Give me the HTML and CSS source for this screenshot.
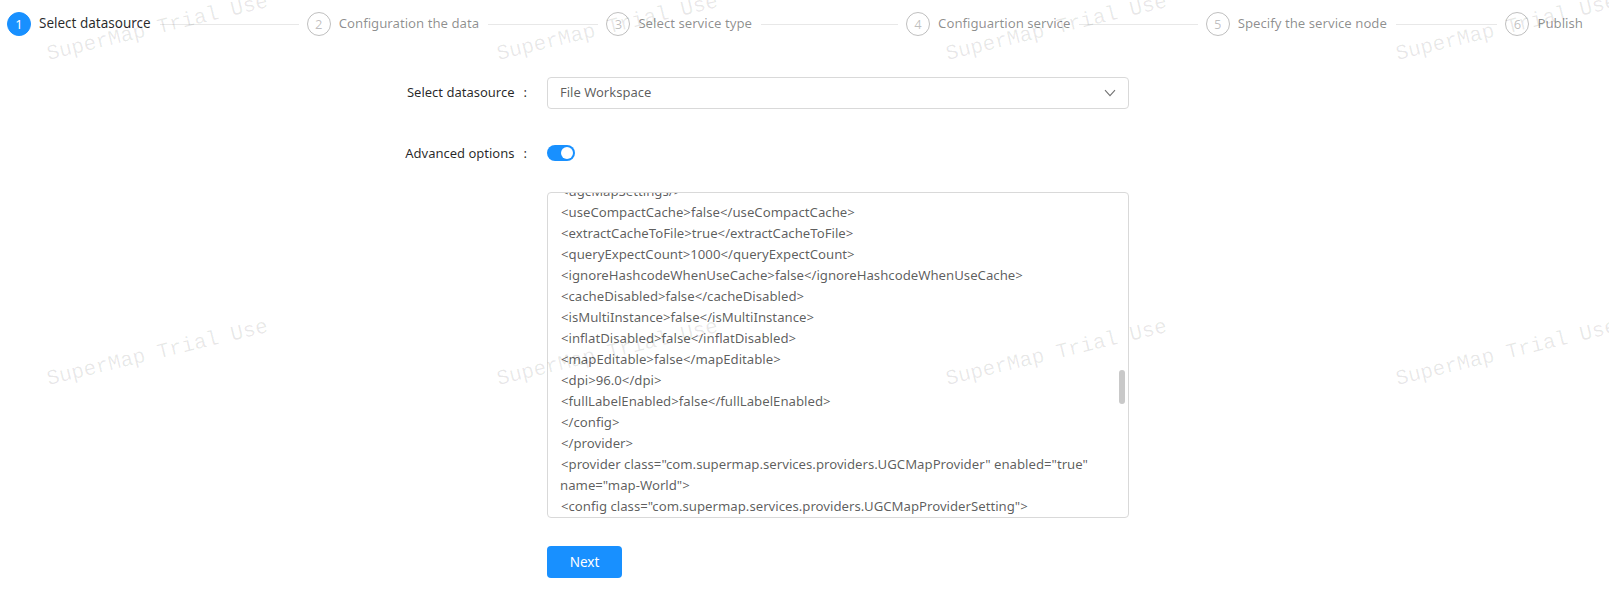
FILE: index.html
```html
<!DOCTYPE html>
<html lang="en">
<head>
<meta charset="utf-8">
<title>Publish service</title>
<link rel="stylesheet" href="styles.css">
</head>
<body>
<div class="page">
  <div class="steps">
    <div class="step active"><span class="num">1</span><span class="title">Select datasource</span><span class="tail"></span></div>
    <div class="step"><span class="num">2</span><span class="title">Configuration the data</span><span class="tail"></span></div>
    <div class="step"><span class="num">3</span><span class="title">Select service type</span><span class="tail"></span></div>
    <div class="step"><span class="num">4</span><span class="title">Configuartion service</span><span class="tail"></span></div>
    <div class="step"><span class="num">5</span><span class="title">Specify the service node</span><span class="tail"></span></div>
    <div class="step last"><span class="num">6</span><span class="title">Publish</span></div>
  </div>
  <div class="form">
    <div class="row row-select">
      <label class="label">Select datasource<span class="colon">:</span></label>
      <div class="select"><span>File Workspace</span>
        <svg class="chev" width="12" height="8" viewBox="0 0 12 8"><path d="M1 1.2 6 6.6 11 1.2" fill="none" stroke="#737373" stroke-width="1.1"/></svg>
      </div>
    </div>
    <div class="row row-switch">
      <label class="label">Advanced options<span class="colon">:</span></label>
      <span class="switch"><span class="knob"></span></span>
    </div>
    <div class="row row-text">
      <span class="label"></span>
      <div class="editor">
        <div class="code">
          <div>&lt;ugcMapSettings/&gt;</div>
          <div>&lt;useCompactCache&gt;false&lt;/useCompactCache&gt;</div>
          <div>&lt;extractCacheToFile&gt;true&lt;/extractCacheToFile&gt;</div>
          <div>&lt;queryExpectCount&gt;1000&lt;/queryExpectCount&gt;</div>
          <div>&lt;ignoreHashcodeWhenUseCache&gt;false&lt;/ignoreHashcodeWhenUseCache&gt;</div>
          <div>&lt;cacheDisabled&gt;false&lt;/cacheDisabled&gt;</div>
          <div>&lt;isMultiInstance&gt;false&lt;/isMultiInstance&gt;</div>
          <div>&lt;inflatDisabled&gt;false&lt;/inflatDisabled&gt;</div>
          <div>&lt;mapEditable&gt;false&lt;/mapEditable&gt;</div>
          <div>&lt;dpi&gt;96.0&lt;/dpi&gt;</div>
          <div>&lt;fullLabelEnabled&gt;false&lt;/fullLabelEnabled&gt;</div>
          <div>&lt;/config&gt;</div>
          <div>&lt;/provider&gt;</div>
          <div>&lt;provider class="com.supermap.services.providers.UGCMapProvider" enabled="true"</div>
          <div class="wrapped">name="map-World"&gt;</div>
          <div>&lt;config class="com.supermap.services.providers.UGCMapProviderSetting"&gt;</div>
        </div>
        <span class="thumb"></span>
      </div>
    </div>
    <div class="row row-btn">
      <span class="label"></span>
      <button class="next" type="button">Next</button>
    </div>
  </div>
  <div class="watermarks" aria-hidden="true">
    <span>SuperMap Trial Use</span><span>SuperMap Trial Use</span><span>SuperMap Trial Use</span><span>SuperMap Trial Use</span>
    <span>SuperMap Trial Use</span><span>SuperMap Trial Use</span><span>SuperMap Trial Use</span><span>SuperMap Trial Use</span>
  </div>
</div>
</body>
</html>
```
FILE: styles.css
```css
* { box-sizing: border-box; }
html, body { margin: 0; padding: 0; background: #fff; }
body {
  font-family: "Noto Sans", "Open Sans", Arial, sans-serif;
  font-size: 13px;
  color: rgba(0, 0, 0, .65);
  overflow: hidden;
}
.page { position: relative; width: 1609px; height: 613px; overflow: hidden; }

.steps { display: flex; padding: 12px 0 0 7px; height: 77px; }
.step { display: flex; align-items: flex-start; width: 299.7px; flex: none; height: 24px; }
.step.last { width: auto; }
.num {
  width: 24px; height: 24px; border-radius: 50%;
  border: 1px solid rgba(0, 0, 0, .25);
  color: rgba(0, 0, 0, .25);
  font-size: 13px; line-height: 22px; text-align: center; flex: none;
}
.title { margin-left: 8px; line-height: 23px; color: rgba(0, 0, 0, .45); font-size: 13.2px; white-space: nowrap; }
.tail { flex: 1; height: 1px; background: #e8e8e8; margin: 12px 8px 0 9px; }
.active .num { background: #1890ff; border-color: #1890ff; color: #fff; }
.active .title { color: rgba(0, 0, 0, .85); font-size: 13.5px; }

.row { display: flex; }
.label { width: 530px; flex: none; margin-right: 17px; text-align: right; color: rgba(0, 0, 0, .85); white-space: nowrap; line-height: 30px; }
.colon { display: inline-block; width: 15.5px; text-align: right; padding-right: 3px; }
.row-select { height: 32px; }
.select {
  width: 582px; height: 32px; border: 1px solid #d9d9d9; border-radius: 4px;
  display: flex; align-items: center; justify-content: space-between;
  padding: 0 12px 2px 12px; line-height: 28px;
}
.chev { margin-top: 2px; }
.row-switch { margin-top: 36px; height: 16px; align-items: center; }
.switch { display: block; position: relative; width: 28px; height: 16px; border-radius: 8px; background: #1890ff; }
.knob { position: absolute; top: 2px; right: 2px; width: 12px; height: 12px; border-radius: 50%; background: #fff; }
.row-text { margin-top: 31px; }
.editor {
  position: relative; width: 582px; height: 326px; border: 1px solid #d9d9d9; border-radius: 4px;
  overflow: hidden; padding: 0 30px 0 13px; line-height: 21px; font-size: 13.2px;
}
.code { margin-top: -12px; }
.code > div { white-space: nowrap; }
.code > .wrapped { margin-left: -1px; }
.thumb { position: absolute; top: 177px; right: 3px; width: 6px; height: 34px; border-radius: 3px; background: #c9c9c9; }
.row-btn { margin-top: 28px; }
.next {
  width: 75px; height: 32px; border: 0; border-radius: 4px;
  background: #1890ff; color: #fff; font: inherit; font-size: 13.5px; padding: 0 0 1px;
}

.watermarks {
  position: absolute; left: 0; top: 0; pointer-events: none;
  display: grid; grid-template-columns: repeat(4, 449.5px); grid-template-rows: repeat(2, 325px);
}
.watermarks span {
  display: block; width: 240px; height: 24px; margin: 15px 0 0 44px;
  font-family: "Liberation Mono", monospace; font-size: 21px; line-height: 24px; white-space: nowrap;
  color: rgba(0, 0, 0, .09);
  transform: rotate(-13.6deg);
}
```
